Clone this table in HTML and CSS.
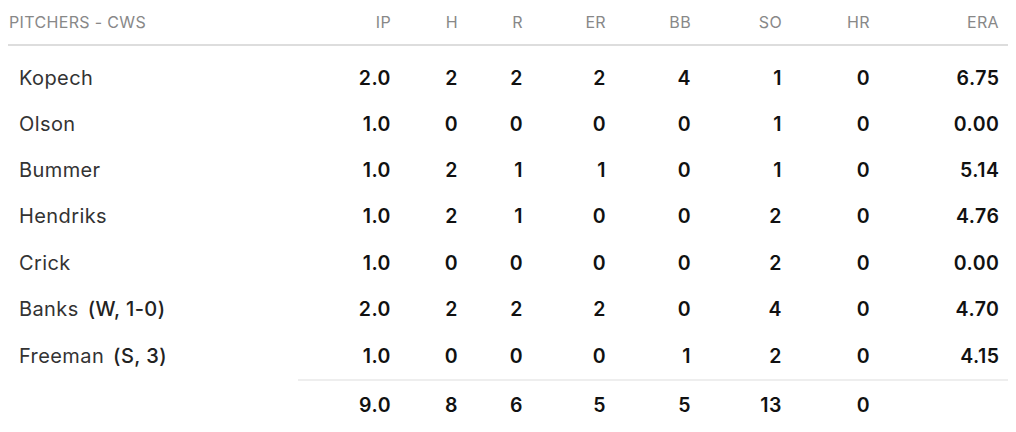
FILE: index.html
```html
<!DOCTYPE html>
<html>
<head>
<meta charset="utf-8">
<link rel="stylesheet" href="styles.css">
</head>
<body>
<table class="box">
  <colgroup>
    <col class="c-name"><col class="c-ip"><col class="c-h"><col class="c-r"><col class="c-er"><col class="c-bb"><col class="c-so"><col class="c-hr"><col class="c-era">
  </colgroup>
  <thead>
    <tr class="head">
      <th class="name">PITCHERS - CWS</th><th>IP</th><th>H</th><th>R</th><th>ER</th><th>BB</th><th>SO</th><th>HR</th><th class="last">ERA</th>
    </tr>
  </thead>
  <tbody>
    <tr class="row first"><td class="name">Kopech</td><td>2.0</td><td>2</td><td>2</td><td>2</td><td>4</td><td>1</td><td>0</td><td class="last">6.75</td></tr>
    <tr class="row"><td class="name">Olson</td><td>1.0</td><td>0</td><td>0</td><td>0</td><td>0</td><td>1</td><td>0</td><td class="last">0.00</td></tr>
    <tr class="row"><td class="name">Bummer</td><td>1.0</td><td>2</td><td>1</td><td>1</td><td>0</td><td>1</td><td>0</td><td class="last">5.14</td></tr>
    <tr class="row"><td class="name">Hendriks</td><td>1.0</td><td>2</td><td>1</td><td>0</td><td>0</td><td>2</td><td>0</td><td class="last">4.76</td></tr>
    <tr class="row"><td class="name">Crick</td><td>1.0</td><td>0</td><td>0</td><td>0</td><td>0</td><td>2</td><td>0</td><td class="last">0.00</td></tr>
    <tr class="row"><td class="name">Banks<span class="note">(W, 1-0)</span></td><td>2.0</td><td>2</td><td>2</td><td>2</td><td>0</td><td>4</td><td>0</td><td class="last">4.70</td></tr>
    <tr class="row"><td class="name">Freeman<span class="note">(S, 3)</span></td><td>1.0</td><td>0</td><td>0</td><td>0</td><td>1</td><td>2</td><td>0</td><td class="last">4.15</td></tr>
  </tbody>
  <tfoot>
    <tr class="total"><td class="name blank"></td><td>9.0</td><td>8</td><td>6</td><td>5</td><td>5</td><td>13</td><td>0</td><td class="last"></td></tr>
  </tfoot>
</table>
</body>
</html>
```

FILE: styles.css
```css
html, body {
  margin: 0;
  padding: 0;
  background: #ffffff;
}
body {
  padding: 0 8px;
  font-family: "Inter", "Liberation Sans", sans-serif;
}
.box {
  width: 1000px;
  border-collapse: collapse;
  table-layout: fixed;
}
.c-name { width: 290px; }
.c-ip { width: 93px; }
.c-h { width: 67px; }
.c-r { width: 65px; }
.c-er { width: 83px; }
.c-bb { width: 85px; }
.c-so { width: 91px; }
.c-hr { width: 88px; }
.c-era { width: 138px; }

th, td {
  padding: 0;
  text-align: right;
  white-space: nowrap;
}
.head th {
  height: 44px;
  border-bottom: 2px solid #dddddd;
  font-size: 16px;
  font-weight: 400;
  letter-spacing: 0.35px;
  color: #888888;
  vertical-align: middle;
}
.head th.name {
  text-align: left;
  padding-left: 1px;
}
.last { padding-right: 9px; }

.row td {
  height: 46.4px;
  font-size: 19.5px;
  font-weight: 600;
  letter-spacing: 0.5px;
  color: #111111;
  vertical-align: middle;
}
.row.first td {
  height: 55.4px;
  padding-top: 9px;
  box-sizing: border-box;
}
.row td.name {
  text-align: left;
  padding-left: 11px;
  font-size: 20px;
  font-weight: 400;
  letter-spacing: 0.4px;
  color: #333333;
}
.row td.last { padding-right: 8.5px; }
.note {
  margin-left: 9px;
  font-weight: 500;
  color: #222222;
}
.total td {
  height: 48px;
  border-top: 2px solid #eeeeee;
  font-size: 19.5px;
  font-weight: 600;
  letter-spacing: 0.5px;
  color: #111111;
  vertical-align: middle;
}
.total td.blank { border-top: none; }
```
